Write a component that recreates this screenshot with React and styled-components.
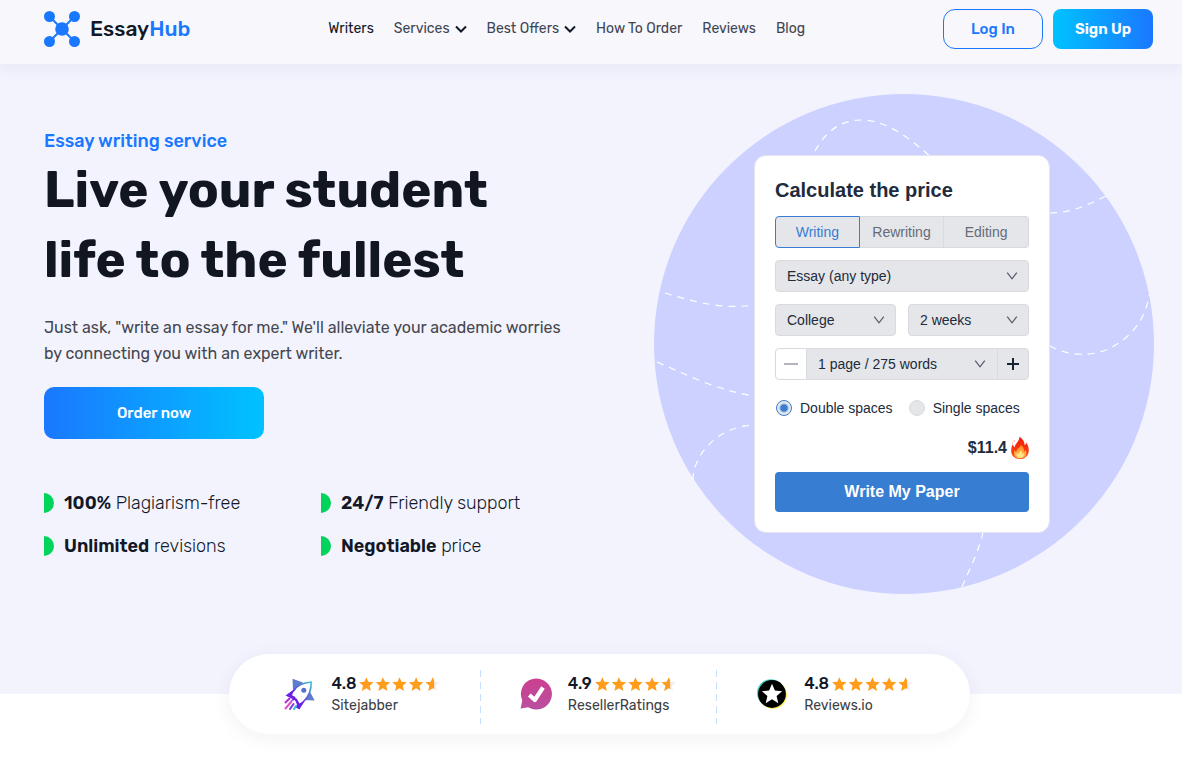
import React, { useState } from 'react';
import styled, { createGlobalStyle } from 'styled-components';

const GlobalStyle = createGlobalStyle`
  *, *::before, *::after {
    box-sizing: border-box;
  }
  body {
    margin: 0;
    background: #fff;
    color: #111827;
    font-family: Rubik, Inter, sans-serif;
  }
  button, select {
    font-family: inherit;
    cursor: pointer;
  }
`;

const Header = styled.header`
  position: relative;
  display: flex;
  align-items: center;
  justify-content: space-between;
  height: 64px;
  padding: 0 29px 6px 44px;
  background: #f7f7fc;
  box-shadow: 0 4px 16px rgba(30, 30, 60, 0.06);
`;

const Logo = styled.a`
  display: flex;
  align-items: center;
  gap: 10px;
  color: #111827;
  font-size: 21px;
  font-weight: 500;
  line-height: 36px;
  text-decoration: none;
`;

const LogoAccent = styled.span`
  color: #1a78ff;
`;

const Nav = styled.nav`
  display: flex;
  align-items: center;
  gap: 20px;
`;

const NavLink = styled.a`
  display: flex;
  align-items: center;
  gap: 5px;
  color: ${(props) => (props.$active ? '#111827' : '#3f4552')};
  font-size: 14px;
  line-height: 20px;
  text-decoration: none;
`;

const HeaderActions = styled.div`
  display: flex;
  gap: 10px;
`;

const HeaderButton = styled.button`
  width: 100px;
  height: 40px;
  padding: 0;
  border: ${(props) => (props.$primary ? 'none' : '1px solid #1a78ff')};
  border-radius: ${(props) => (props.$primary ? '8px' : '12px')};
  background: ${(props) => (props.$primary ? 'linear-gradient(90deg, #00c2ff, #1a78ff)' : 'transparent')};
  color: ${(props) => (props.$primary ? '#fff' : '#1a78ff')};
  font-size: 15px;
  font-weight: ${(props) => (props.$primary ? 600 : 500)};
`;

const Hero = styled.section`
  display: grid;
  grid-template-columns: 1fr 500px;
  align-items: start;
  padding: 30px 28px 100px 44px;
  background: #f3f3fe;
`;

const Intro = styled.div`
  padding-top: 33px;
`;

const Tagline = styled.p`
  margin: 0;
  color: #1a78ff;
  font-size: 18px;
  font-weight: 500;
  line-height: 28px;
`;

const Title = styled.h1`
  max-width: 520px;
  margin: 0 0 20px;
  color: #111620;
  font-size: 51px;
  font-weight: 700;
  line-height: 70px;
`;

const Lead = styled.p`
  max-width: 530px;
  margin: 0 0 20px;
  color: #45474e;
  font-size: 16px;
  line-height: 26px;
`;

const OrderButton = styled.button`
  display: block;
  width: 220px;
  height: 52px;
  border: 0;
  border-radius: 10px;
  background: linear-gradient(90deg, #1a78ff, #00c2ff);
  color: #fff;
  font-size: 15px;
  font-weight: 500;
`;

const Features = styled.ul`
  display: grid;
  grid-template-columns: 277px 277px;
  row-gap: 19px;
  margin: 52px 0 0;
  padding: 0;
  list-style: none;
`;

const Feature = styled.li`
  display: flex;
  align-items: center;
  gap: 10px;
  font-size: 18px;
  font-weight: 300;
  line-height: 24px;

  &::before {
    content: '';
    width: 10px;
    height: 20px;
    border-radius: 0 10px 10px 0;
    background: #00d45a;
  }

  b {
    font-weight: 600;
  }
`;

const Visual = styled.div`
  display: grid;
  grid-template: 500px / 500px;
  align-items: center;

  > * {
    grid-area: 1 / 1;
  }
`;

const Calculator = styled.form`
  position: relative;
  display: flex;
  flex-direction: column;
  gap: 12px;
  width: 296px;
  margin-left: 100px;
  padding: 20px;
  border: 1px solid #e4e5ee;
  border-radius: 12px;
  background: #fff;
  color: #212b3b;
  font-family: 'Liberation Sans', Arial, sans-serif;
`;

const CalculatorTitle = styled.h2`
  margin: 0;
  font-size: 20px;
  font-weight: 700;
  line-height: 28px;
`;

const Tabs = styled.div`
  display: grid;
  grid-template-columns: repeat(3, 1fr);
  height: 32px;
`;

const Tab = styled.button`
  padding: 0;
  border: 1px solid ${(props) => (props.$active ? '#377dd2' : '#d9dadf')};
  border-left-width: ${(props) => (props.$active || props.$first ? '1px' : '0')};
  background: #e5e6ea;
  color: ${(props) => (props.$active ? '#377dd2' : '#646b77')};
  font-size: 14px;

  &:first-child {
    border-radius: 4px 0 0 4px;
  }
  &:last-child {
    border-radius: 0 4px 4px 0;
  }
`;

const SelectRow = styled.div`
  display: grid;
  grid-template-columns: 1fr 1fr;
  gap: 12px;
`;

const SelectBox = styled.div`
  display: grid;
  flex: 1;
  align-items: center;

  > * {
    grid-area: 1 / 1;
  }
  > svg {
    justify-self: end;
    margin-right: 11px;
    pointer-events: none;
  }
`;

const Select = styled.select`
  width: 100%;
  height: 32px;
  padding: 0 28px 0 11px;
  appearance: none;
  border: 1px solid #d9dadf;
  border-width: ${(props) => (props.$joined ? '1px 0' : '1px')};
  border-radius: ${(props) => (props.$joined ? '0' : '4px')};
  background: #e5e6ea;
  color: #212b3b;
  font-size: 14px;
`;

const PageCount = styled.div`
  display: flex;
`;

const StepButton = styled.button`
  display: grid;
  place-items: center;
  width: 32px;
  height: 32px;
  padding: 0;
  border: 1px solid #d9dadf;
  border-radius: ${(props) => (props.$minus ? '4px 0 0 4px' : '0 4px 4px 0')};
  background: ${(props) => (props.$minus ? '#fff' : '#e5e6ea')};
  color: ${(props) => (props.$minus ? '#9a9da6' : '#1b2233')};
`;

const Spacing = styled.div`
  display: flex;
  gap: 16px;
  padding: 6px 1px;
`;

const RadioLabel = styled.label`
  display: flex;
  align-items: center;
  gap: 8px;
  font-size: 14px;
  line-height: 20px;
`;

const Radio = styled.input`
  width: 16px;
  height: 16px;
  margin: 0;
  appearance: none;
  border: 1px solid #d9dadf;
  border-radius: 50%;
  background: #e5e6ea;

  &:checked {
    border-color: #377dd2;
    background: radial-gradient(circle, #377dd2 3px, #e5e6ea 5px);
  }
`;

const Price = styled.div`
  display: flex;
  align-items: center;
  justify-content: flex-end;
  gap: 4px;
  font-size: 16px;
  font-weight: 700;
  line-height: 24px;
`;

const SubmitButton = styled.button`
  height: 40px;
  border: 0;
  border-radius: 4px;
  background: #377dd2;
  color: #fff;
  font-size: 16px;
  font-weight: 700;
`;

const RatingsWrap = styled.div`
  padding: 0 28px 0 44px;
`;

const Ratings = styled.section`
  position: relative;
  display: grid;
  grid-template-columns: repeat(3, 1fr);
  align-items: center;
  max-width: 741px;
  height: 80px;
  margin: -40px auto 32px;
  padding: 0 16px;
  border-radius: 40px;
  background: #fff;
  box-shadow: 0 4px 20px rgba(30, 30, 80, 0.06);
`;

const Rating = styled.div`
  display: flex;
  align-items: center;
  gap: 16px;
  height: 60px;
  padding-left: 39px;
  background: ${(props) =>
    props.$last ? 'none' : 'repeating-linear-gradient(#c5ddff 0 7px, transparent 7px 12px) right bottom / 1px 54px no-repeat'};
`;

const RatingText = styled.div`
  padding-top: 2px;
`;

const Score = styled.div`
  display: flex;
  align-items: center;
  gap: 3px;
  font-size: 16px;
  font-weight: 500;
  line-height: 22px;
`;

const Source = styled.div`
  color: #3d3f45;
  font-size: 14px;
  line-height: 22px;
`;

const LogoMark = () => (
  <svg width="36" height="36" viewBox="0 0 36 36" fill="#1a78ff" aria-hidden="true">
    <path d="M5.500 5.500l25 25M30.500 5.500l-25 25" stroke="#1a78ff" strokeWidth="2" />
    <circle cx="5.500" cy="5.500" r="5.500" />
    <circle cx="30.500" cy="5.500" r="5.500" />
    <circle cx="5.500" cy="30.500" r="5.500" />
    <circle cx="30.500" cy="30.500" r="5.500" />
    <circle cx="18" cy="18" r="6.800" />
  </svg>
);

const NavChevron = () => (
  <svg width="12" height="8" viewBox="0 0 12 8" fill="none" stroke="#111827" strokeWidth="2" aria-hidden="true">
    <path d="M1 1.500l5 5 5-5" />
  </svg>
);

const SelectChevron = () => (
  <svg width="12" height="8" viewBox="0 0 12 8" fill="none" stroke="#565d6b" strokeWidth="1.300" aria-hidden="true">
    <path d="M1.200 .6L6 6.800 10.800 .6" />
  </svg>
);

const Globe = () => (
  <svg width="500" height="500" viewBox="0 0 500 500" aria-hidden="true">
    <circle cx="250" cy="250" r="250" fill="#cdd1ff" />
    <g fill="none" stroke="#fff" strokeWidth="1.200" strokeDasharray="7 6">
      <path d="M161 57c12-22 28-31 46-31 25 0 47 17 70 37" />
      <path d="M396 119c20 0 36-7 56-17" />
      <path d="M396 252c14 8 35 12 56 4 25-11 40-31 43-55" />
      <path d="M11 199c27 8 56 17 89 12" />
      <path d="M3 268c32 14 60 28 97 34" />
      <path d="M39 386c0-26 26-54 61-55" />
      <path d="M329 438c-3 16-12 34-21 55" />
    </g>
  </svg>
);

const Flame = () => (
  <svg width="18" height="24" viewBox="0 0 18 24" aria-hidden="true">
    <defs>
      <linearGradient id="flame" x1="0" y1="0" x2="0" y2="1">
        <stop offset="0" stopColor="#f01c08" />
        <stop offset="1" stopColor="#ff4a18" />
      </linearGradient>
      <linearGradient id="flameCore" x1="0" y1="0" x2="0" y2="1">
        <stop offset="0" stopColor="#ff8a2a" />
        <stop offset="1" stopColor="#ffc04a" />
      </linearGradient>
    </defs>
    <path
      fill="url(#flame)"
      d="M8.500 .8c3.400 2 5.100 5 5.100 8.200 1-.5 1.500-1.300 1.500-2.600 1.900 2.100 2.700 5 2.700 7.800 0 5-3.500 8.800-8.800 8.800S.2 19.700.2 14.800C.2 12 .8 9.800 1.800 8c.2 1.700.9 2.700 2 3.200C3.600 8 8.300 6 8.500 .8z"
    />
    <path
      fill="url(#flameCore)"
      d="M9.800 9c-.3 2.800-4.600 3.700-4.500 7-.9-.4-1.500-1.200-1.600-2.300C2.300 16 2.300 22.300 9 22.300s7.300-5.600 5.600-8.900c-.3 1.100-.8 1.700-1.700 2.100.4-2.700-1-5.300-3.100-6.500z"
    />
    <path
      fill="#ffe58a"
      d="M9.400 14c.1 1.800-2 2.500-2.100 4.200-.8-.3-1.200-.8-1.400-1.500-1.200 3 .3 5 3.200 5s4.500-2.500 3.300-5.200c-.3.800-.7 1.200-1.300 1.400 0-1.600-.5-3-1.700-3.900z"
    />
    <path fill="#f66" d="M2.500 4.200l1.500.5-.8 1.400zM1 6.200l1 .5-.8 1z" />
  </svg>
);

const RocketIcon = () => (
  <svg width="32" height="32" viewBox="0 0 32 32" fill="none" aria-hidden="true">
    <defs>
      <linearGradient id="rocket" x1="4" y1="28" x2="28" y2="4" gradientUnits="userSpaceOnUse">
        <stop offset="0.300" stopColor="#6a22e8" />
        <stop offset="0.650" stopColor="#5a68d8" />
        <stop offset="1" stopColor="#35d0cf" />
      </linearGradient>
    </defs>
    <path fill="#5d7fcb" d="M8.500 .8L19 4.500 13 15l-4-2zM25 12l5.700 10.500L19.500 22z" />
    <path
      fill="#fff"
      stroke="url(#rocket)"
      strokeWidth="1.600"
      strokeLinejoin="round"
      d="M27.200 4c-7 .6-13.500 2.500-17.200 8.500L4 17l6 2 3 5 2.600 5 4.400-6c4.800-4.600 7.400-11 7.200-19z"
    />
    <path fill="#6a22e8" d="M10 12L1.500 17.500l7 3.500-2 2 5-1 1.500 5-2 2 4.500 2.500L20 23l-3 1.500-1.500 1L13 21l-5-3.500z" />
    <circle cx="19.800" cy="12.200" r="2.500" fill="#5470cd" />
    <g strokeWidth="2" strokeLinecap="round">
      <path stroke="#b82adc" d="M5.500 20.500l-4 4" />
      <path stroke="#e04fc4" d="M7.500 23.500l-6 7" />
      <path stroke="#7c39e8" d="M9.500 26l-3.500 5" />
      <path stroke="#2cc6d8" d="M12 28l-2 3" />
    </g>
  </svg>
);

const CheckBubbleIcon = () => (
  <svg width="32" height="32" viewBox="0 0 32 32" fill="none" aria-hidden="true">
    <defs>
      <linearGradient id="bubble" x1="0" y1="0" x2="0" y2="1">
        <stop offset="0" stopColor="#cc3f90" />
        <stop offset="1" stopColor="#b8509f" />
      </linearGradient>
    </defs>
    <path fill="url(#bubble)" d="M16.500.5a15.500 15.500 0 1 1-8.200 28.700L.6 30.500l1.700-8A15.500 15.500 0 0 1 16.500.5z" />
    <path stroke="#fff" strokeWidth="4.200" strokeLinejoin="round" d="M9.300 17l5.500 5L23 9.500" />
  </svg>
);

const StarBadgeIcon = () => (
  <svg width="32" height="32" viewBox="0 0 32 32" aria-hidden="true">
    <circle cx="14.800" cy="15" r="13.800" fill="#3fd0c0" />
    <circle cx="17" cy="17" r="13.800" fill="#fbe94a" />
    <circle cx="16" cy="16" r="13.900" fill="#000" />
    <path
      fill="#fff"
      d="M16 5.800l2.900 6.800 7.200.6-5.500 4.800 1.700 7.200-6.300-3.900-6.300 3.900 1.700-7.200-5.500-4.800 7.200-.6z"
    />
  </svg>
);

const STAR = 'M6.500 -.3l2 4.600 5.200.5-3.900 3.500 1.200 5.100-4.500-2.700-4.500 2.700 1.200-5.100-3.900-3.500 5.200-.5z';

const Stars = () => (
  <svg width="82" height="14" viewBox="0 0 82 14" fill="#ff9c1a" aria-hidden="true">
    <defs>
      <clipPath id="partial">
        <rect x="-1" y="-1" width="9" height="15" />
      </clipPath>
    </defs>
    {[0, 1, 2, 3].map((n) => (
      <path key={n} d={STAR} transform={`translate(${n * 16.6 + 0.8} 0.5)`} />
    ))}
    <g transform="translate(67.200 0.500)">
      <path d={STAR} fill="#f0f0f6" />
      <path d={STAR} clipPath="url(#partial)" />
    </g>
  </svg>
);

const navItems = [
  { label: 'Writers', active: true },
  { label: 'Services', menu: true },
  { label: 'Best Offers', menu: true },
  { label: 'How To Order' },
  { label: 'Reviews' },
  { label: 'Blog' },
];

const features = [
  ['100%', 'Plagiarism-free'],
  ['24/7', 'Friendly support'],
  ['Unlimited', 'revisions'],
  ['Negotiable', 'price'],
];

const ratings = [
  { source: 'Sitejabber', score: '4.8', Icon: RocketIcon },
  { source: 'ResellerRatings', score: '4.9', Icon: CheckBubbleIcon },
  { source: 'Reviews.io', score: '4.8', Icon: StarBadgeIcon },
];

const SelectField = ({ label, value, joined }) => (
  <SelectBox>
    <Select aria-label={label} defaultValue={value} $joined={joined}>
      <option>{value}</option>
    </Select>
    <SelectChevron />
  </SelectBox>
);

const PriceCalculator = () => {
  const [service, setService] = useState('Writing');
  const [spaces, setSpaces] = useState('Double');

  return (
    <Calculator onSubmit={(e) => e.preventDefault()}>
      <CalculatorTitle>Calculate the price</CalculatorTitle>
      <Tabs>
        {['Writing', 'Rewriting', 'Editing'].map((name, i) => (
          <Tab
            key={name}
            type="button"
            aria-pressed={service === name}
            $active={service === name}
            $first={i === 0}
            onClick={() => setService(name)}
          >
            {name}
          </Tab>
        ))}
      </Tabs>
      <SelectField label="Type of paper" value="Essay (any type)" />
      <SelectRow>
        <SelectField label="Academic level" value="College" />
        <SelectField label="Deadline" value="2 weeks" />
      </SelectRow>
      <PageCount>
        <StepButton type="button" aria-label="Fewer pages" $minus>
          <svg width="14" height="14" viewBox="0 0 14 14" stroke="currentColor" strokeWidth="1.500">
            <path d="M0 7h14" />
          </svg>
        </StepButton>
        <SelectField label="Pages" value="1 page / 275 words" joined />
        <StepButton type="button" aria-label="More pages">
          <svg width="12" height="12" viewBox="0 0 12 12" stroke="currentColor" strokeWidth="2">
            <path d="M0 6h12M6 0v12" />
          </svg>
        </StepButton>
      </PageCount>
      <Spacing>
        {['Double', 'Single'].map((name) => (
          <RadioLabel key={name}>
            <Radio type="radio" name="spaces" checked={spaces === name} onChange={() => setSpaces(name)} />
            {name} spaces
          </RadioLabel>
        ))}
      </Spacing>
      <Price>
        $11.4
        <Flame />
      </Price>
      <SubmitButton type="submit">Write My Paper</SubmitButton>
    </Calculator>
  );
};

const App = () => (
  <>
    <GlobalStyle />
    <Header>
      <Logo href="#">
        <LogoMark />
        <span>
          Essay<LogoAccent>Hub</LogoAccent>
        </span>
      </Logo>
      <Nav>
        {navItems.map((item) => (
          <NavLink key={item.label} href="#" $active={item.active}>
            {item.label}
            {item.menu && <NavChevron />}
          </NavLink>
        ))}
      </Nav>
      <HeaderActions>
        <HeaderButton type="button">Log In</HeaderButton>
        <HeaderButton type="button" $primary>
          Sign Up
        </HeaderButton>
      </HeaderActions>
    </Header>
    <main>
      <Hero>
        <Intro>
          <Tagline>Essay writing service</Tagline>
          <Title>Live your student life to the fullest</Title>
          <Lead>
            Just ask, "write an essay for me." We'll alleviate your academic worries by connecting you with an expert
            writer.
          </Lead>
          <OrderButton type="button">Order now</OrderButton>
          <Features>
            {features.map(([strong, rest]) => (
              <Feature key={strong}>
                <span>
                  <b>{strong}</b> {rest}
                </span>
              </Feature>
            ))}
          </Features>
        </Intro>
        <Visual>
          <Globe />
          <PriceCalculator />
        </Visual>
      </Hero>
      <RatingsWrap>
        <Ratings>
          {ratings.map(({ source, score, Icon }, i) => (
            <Rating key={source} $last={i === ratings.length - 1}>
              <Icon />
              <RatingText>
                <Score>
                  {score}
                  <Stars />
                </Score>
                <Source>{source}</Source>
              </RatingText>
            </Rating>
          ))}
        </Ratings>
      </RatingsWrap>
    </main>
  </>
);

export default App;
